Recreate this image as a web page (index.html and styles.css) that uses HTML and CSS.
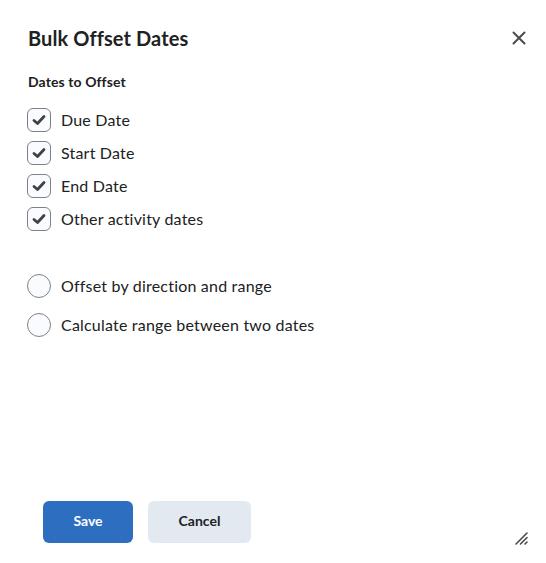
FILE: index.html
```html
<!DOCTYPE html>
<html lang="en">
<head>
<meta charset="utf-8">
<title>Bulk Offset Dates</title>
<link rel="stylesheet" href="styles.css">
</head>
<body>
<div class="dialog">
  <div class="header">
    <h2 class="title">Bulk Offset Dates</h2>
    <button class="close" aria-label="Close">
      <svg width="14" height="14" viewBox="0 0 14 14"><path d="M1.5 1.5 L12.5 12.5 M12.5 1.5 L1.5 12.5" stroke="#494c4e" stroke-width="2" stroke-linecap="round"/></svg>
    </button>
  </div>
  <div class="content">
    <div class="group-label">Dates to Offset</div>
    <ul class="checks">
      <li class="check-row"><span class="box"><svg width="14" height="12" viewBox="0 0 14 12"><path d="M2 6.5 L5.5 9.5 L12 2.5" fill="none" stroke="#3f4244" stroke-width="2.8" stroke-linecap="round" stroke-linejoin="round"/></svg></span><span class="txt">Due Date</span></li>
      <li class="check-row"><span class="box"><svg width="14" height="12" viewBox="0 0 14 12"><path d="M2 6.5 L5.5 9.5 L12 2.5" fill="none" stroke="#3f4244" stroke-width="2.8" stroke-linecap="round" stroke-linejoin="round"/></svg></span><span class="txt">Start Date</span></li>
      <li class="check-row"><span class="box"><svg width="14" height="12" viewBox="0 0 14 12"><path d="M2 6.5 L5.5 9.5 L12 2.5" fill="none" stroke="#3f4244" stroke-width="2.8" stroke-linecap="round" stroke-linejoin="round"/></svg></span><span class="txt">End Date</span></li>
      <li class="check-row"><span class="box"><svg width="14" height="12" viewBox="0 0 14 12"><path d="M2 6.5 L5.5 9.5 L12 2.5" fill="none" stroke="#3f4244" stroke-width="2.8" stroke-linecap="round" stroke-linejoin="round"/></svg></span><span class="txt">Other activity dates</span></li>
    </ul>
    <ul class="radios">
      <li class="radio-row"><span class="circle"></span><span class="txt">Offset by direction and range</span></li>
      <li class="radio-row"><span class="circle"></span><span class="txt">Calculate range between two dates</span></li>
    </ul>
  </div>
  <div class="footer">
    <button class="btn primary">Save</button>
    <button class="btn secondary">Cancel</button>
    <span class="grip"><svg width="14" height="14" viewBox="0 0 14 14"><path d="M2 13 L13 2 M6.5 13 L13 6.5 M11 13 L13 11" stroke="#494c4e" stroke-width="1.6" stroke-linecap="round"/></svg></span>
  </div>
</div>
</body>
</html>
```
FILE: styles.css
```css
* { box-sizing: border-box; }
html, body { margin: 0; padding: 0; background: #ffffff; }
body {
  font-family: Lato, "Open Sans", "Liberation Sans", sans-serif;
  color: #202122;
}
.dialog {
  height: 563px;
  display: flex;
  flex-direction: column;
  padding: 0 0 0 28px;
  position: relative;
}
.header {
  display: flex;
  justify-content: space-between;
  align-items: center;
  padding-top: 26px;
  padding-right: 20px;
}
.title {
  margin: 0;
  font-size: 20px;
  line-height: 24px;
  font-weight: 700;
  letter-spacing: 0.1px;
}
.close {
  border: 0;
  background: none;
  padding: 0;
  width: 14px;
  height: 14px;
  display: flex;
}
.content { flex: 1; }
.group-label {
  margin-top: 22px;
  font-size: 14px;
  font-weight: 700;
  line-height: 20px;
  letter-spacing: 0.1px;
}
.checks, .radios {
  list-style: none;
  margin: 0;
  padding: 0;
}
.checks { margin-top: 11px; }
.check-row {
  display: flex;
  align-items: center;
  height: 33px;
}
.box {
  width: 24px;
  height: 24px;
  border: 1px solid #7c8285;
  border-radius: 6px;
  background: #f9fbff;
  display: flex;
  align-items: center;
  justify-content: center;
  margin-left: -1px;
}
.txt {
  font-size: 16px;
  line-height: 24px;
  margin-left: 10px;
  letter-spacing: 0.2px;
}
.radios { margin-top: 31px; }
.radio-row {
  display: flex;
  align-items: center;
  height: 39px;
}
.circle {
  width: 24px;
  height: 24px;
  border: 1px solid #7c8285;
  border-radius: 50%;
  background: #f9fbff;
  margin-left: -1px;
}
.footer {
  display: flex;
  align-items: center;
  gap: 15px;
  padding-left: 15px;
  padding-bottom: 20px;
}
.btn {
  font-family: Lato, "Open Sans", "Liberation Sans", sans-serif;
  font-size: 14px;
  font-weight: 700;
  line-height: 18px;
  height: 42px;
  border: 0;
  border-radius: 6px;
  padding: 0 0 3px 0;
}
.primary { width: 90px; background: #2d6ec0; color: #ffffff; }
.secondary { width: 103px; background: #e3e9f1; color: #202122; }
.grip {
  position: absolute;
  right: 18px;
  bottom: 18px;
  width: 14px;
  height: 14px;
  display: flex;
}
```
